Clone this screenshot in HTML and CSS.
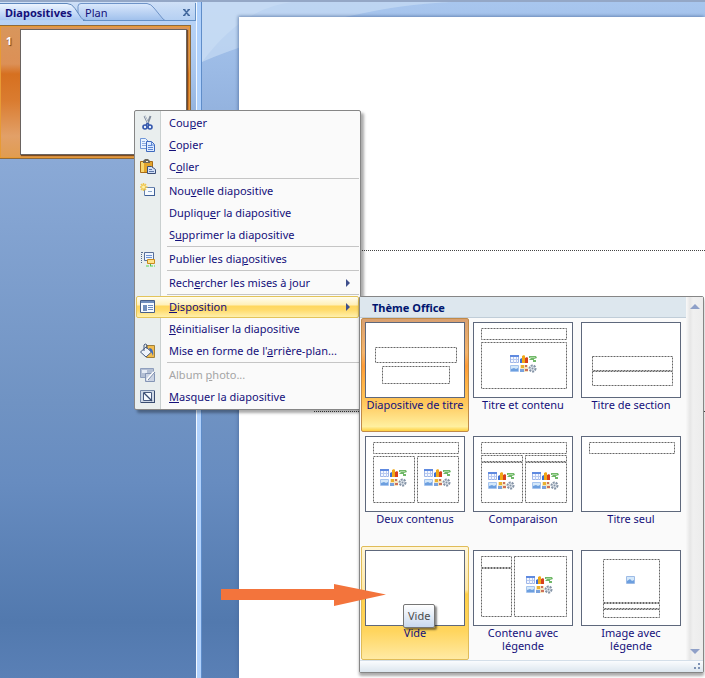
FILE: index.html
```html
<!DOCTYPE html>
<html lang="fr">
<head>
<meta charset="utf-8">
<title>Présentation</title>
<link rel="stylesheet" href="styles.css">
</head>
<body>
<svg class="defs" aria-hidden="true">
  <defs>
    <linearGradient id="sky" x1="0" y1="0" x2="0" y2="1"><stop offset="0" stop-color="#eef5ff"/><stop offset="1" stop-color="#a9c8f2"/></linearGradient>
    <linearGradient id="tab" x1="0" y1="0" x2="0" y2="1"><stop offset="0" stop-color="#dbe9fc"/><stop offset=".5" stop-color="#bdd4f4"/><stop offset="1" stop-color="#9fc0ec"/></linearGradient>
  </defs>
  <symbol id="content" viewBox="0 0 27 18">
    <path fill="#f4f8ff" stroke="#9fb6e8" d="M.5.5h8v7h-8z"/><path fill="#5f8ae0" d="M0 0h9v2H0z"/><path stroke="#b9caf0" d="M1 4.500h7M3.500 2v6M6.500 2v6"/>
    <path fill="#3f6fd0" d="M10 4l2-1v5h-2z"/><path fill="#f0a818" d="M12 1l2-1 1 1v7h-3z"/><path fill="#d8401c" d="M15 3l2-1 1 1v5h-3z"/>
    <path fill="#70b868" d="M19 1h7l1 2-3 1v1h2v2h-3V5h-4l2-2h-2z"/><path stroke="#a8d8a0" d="M20 2.500h5"/>
    <path fill="#d4e8fa" stroke="#a6c4ee" d="M.5 10.500h8v6h-8z"/><path fill="#6c9fdf" d="M1 14l3-1 2 1 2-1v3H1z"/>
    <path fill="#f6e6c0" d="M10 10h8v7h-8z"/><path fill="#e8b030" d="M11 10h3v3h-3z"/><path fill="#7aa2dc" d="M10 14h4v3h-4z"/><path fill="#cc705a" d="M15 10h2v2h-2zM15 14h3v2h-3z"/>
    <circle cx="22.500" cy="13.500" r="3" fill="#e4e9ef" stroke="#8493a6" stroke-width="2" stroke-dasharray="2 1"/><circle cx="22.500" cy="13.500" r="1" fill="#8493a6"/>
  </symbol>
  <symbol id="picture" viewBox="0 0 9 8">
    <path fill="#d4e8fa" stroke="#9dbbe6" d="M.5.5h8v7h-8z"/><path fill="#6c9fdf" d="M1 5l3-2 2 2 2-1v3H1z"/>
  </symbol>
</svg>

<div class="app">
  <aside class="pane">
    <div class="tabs">
      <svg class="tab-shape" viewBox="0 0 196 18" width="196" height="18" aria-hidden="true">
        <path fill="url(#tab)" stroke="#6f94c8" d="M78 17.500V3.500Q78 .5 81 .5H147Q151 1 154 5L163 16l2 1.500"/>
        <path fill="url(#sky)" stroke="#5f88bd" d="M-1 .5H67q5 0 8 5l6 9q2 3 5 3H-1z"/>
        <path stroke="#6591c6" d="M84 17.500h112M195.500 0v18"/>
        <path stroke="#b4d2f8" d="M0 17.500h83"/>
      </svg>
      <button class="tab tab-active" type="button">Diapositives</button>
      <button class="tab" type="button">Plan</button>
      <button class="close" type="button" aria-label="Fermer"><svg width="7" height="7" viewBox="0 0 7 7" aria-hidden="true"><path d="M0 .5h2.500M4.500.5H7M0 6.500h2.500M4.500 6.500H7M1.500 1l4 5M5.500 1l-4 5" stroke="#44699e" stroke-width="1.600"/></svg></button>
    </div>
    <button class="slide-item" type="button"><span class="slide-number">1</span><span class="slide-mini"></span></button>
  </aside>
  <div class="splitter"></div>
  <main class="workspace">
    <svg class="glow" width="100%" height="70" aria-hidden="true"><path fill="#c9ddf5" fill-opacity=".65" d="M0 0H90Q40 6 0 60z"/><path fill="#c9ddf5" fill-opacity=".65" d="M0 0H90Q40 6 0 60zM0 0H250C180 3 120 20 80 32Q30 47 0 60z"/></svg>
    <div class="slide">
      <div class="slide-content">
        <div class="placeholder title-box"></div>
        <div class="placeholder subtitle-box"></div>
      </div>
    </div>
  </main>
</div>

<ul class="menu">
  <li><button type="button"><svg class="icon" viewBox="0 0 16 16" aria-hidden="true"><path stroke="#7f8b9d" stroke-width="2" d="M4.500 1l4 8M10.500 1l-3 8"/><path stroke="#dbe2ea" d="M5 1l3 7"/><circle cx="5" cy="12" r="2" fill="#eaf1ff" stroke="#3457ac" stroke-width="1.600"/><circle cx="10" cy="12" r="2" fill="#eaf1ff" stroke="#3457ac" stroke-width="1.600"/><path stroke="#3457ac" stroke-width="1.500" d="M7.500 8L6 10M7.500 8L9 10"/></svg><span>Cou<u>p</u>er</span></button></li>
  <li><button type="button"><svg class="icon" viewBox="0 0 16 16" aria-hidden="true"><path fill="#e8f2ff" stroke="#7097d8" d="M.5 1.500h5l3 3v7h-8z"/><path stroke="#8eace0" d="M2 4.500h3M2 6.500h4M2 8.500h4"/><path fill="#deebff" stroke="#3e69bd" d="M6.500 4.500h5l3 3v7h-8z"/><path stroke="#5d87d2" d="M8 8.500h4M8 10.500h5M8 12.500h5M11.500 5v3h3"/></svg><span><u>C</u>opier</span></button></li>
  <li><button type="button"><svg class="icon" viewBox="0 0 16 16" aria-hidden="true"><path fill="#e3a52c" stroke="#a96c16" d="M.5 2.500h12v11H.5z"/><path fill="#f9d870" d="M1 3h3v10H1z"/><path fill="#6c6659" d="M3 4h7V2L8 0H5L3 2z"/><path fill="#f0ebdf" d="M6 2h2v1H6z"/><path fill="#d3e0f6" stroke="#3c4f78" d="M7.500 7.500h4l4 3v4h-8z"/><path stroke="#5d77a8" d="M9 10.500h3M9 12.500h5"/></svg><span>C<u>o</u>ller</span></button></li>
  <li class="separated"><button type="button"><svg class="icon" viewBox="0 0 16 16" aria-hidden="true"><path fill="#f6faff" stroke="#6681ad" d="M4.500 4.500h10v8h-10z"/><path fill="#3f5f96" d="M5 12h10v1H5zM14 5h1v8h-1z"/><path stroke="#89a6cd" d="M8 8.500h4"/><path stroke="#f0c850" stroke-width="1.500" d="M3.500 0v8M0 4h7.500M1 1l5 6M6 1L1 7"/><circle cx="3.500" cy="4" r="1.500" fill="#fff2a8"/></svg><span>Nou<u>v</u>elle diapositive</span></button></li>
  <li><button type="button"><span class="icon"></span><span>Dupliqu<u>e</u>r la diapositive</span></button></li>
  <li><button type="button"><span class="icon"></span><span>S<u>u</u>pprimer la diapositive</span></button></li>
  <li class="separated"><button type="button"><svg class="icon" viewBox="0 0 16 16" aria-hidden="true"><path stroke="#56698c" stroke-dasharray="1 1" d="M1.500 1v11M2 1.500h2"/><path fill="#edf4ff" stroke="#596f98" d="M4.500 1.500h9v8h-9z"/><path stroke="#6f94d3" d="M6 4.500h6M6 6.500h6"/><path fill="#ffe38a" stroke="#c98b1c" d="M7.500 8.500h7v4h-7z"/><path stroke="#54b350" d="M10.500 13v2"/><path stroke="#54d350" stroke-dasharray="3 1" d="M6 15h9"/></svg><span>Publier les dia<u>p</u>ositives</span></button></li>
  <li class="separated"><button type="button"><span class="icon"></span><span>Rech<u>e</u>rcher les mises à jour</span><svg class="more" width="4" height="8" viewBox="0 0 4 8" aria-hidden="true"><path d="M0 0l4 4-4 4z"/></svg></button></li>
  <li class="separated"><button type="button" class="highlight" aria-expanded="true"><svg class="icon" viewBox="0 0 16 16" aria-hidden="true"><path fill="#f7fbff" stroke="#475f89" d="M.5 1.500h14v12H.5z"/><path fill="#6f8ebd" d="M1 2h13v2H1zM3 6h4v6H3z"/><path stroke="#6c8cbd" d="M8 6.500h5M8 8.500h5M8 10.500h5"/></svg><span><u>D</u>isposition</span><svg class="more" width="4" height="8" viewBox="0 0 4 8" aria-hidden="true"><path d="M0 0l4 4-4 4z"/></svg></button></li>
  <li><button type="button"><span class="icon"></span><span><u>R</u>éinitialiser la diapositive</span></button></li>
  <li><button type="button"><svg class="icon" viewBox="0 0 16 16" aria-hidden="true"><path fill="#f3bd4d" stroke="#a0803c" d="M6.500 2.500h8v12h-8z"/><path fill="#eef3fa" stroke="#465a7e" d="M6 4l5.500 5L6 14 .5 9z"/><path stroke="#465a7e" d="M4 8V2q1-2 3 0v4"/><path fill="#3d69bd" d="M9 5q5 0 4 8-1-4-3-5z"/></svg><span>Mise en forme de l'<u>a</u>rrière-plan...</span></button></li>
  <li class="separated"><button type="button" disabled><svg class="icon" viewBox="0 0 16 16" aria-hidden="true"><path fill="#b3bfd4" stroke="#8e9fbd" d="M.5 1.500h13v9H.5z"/><path fill="#e5ebf5" d="M2 3h5v3H2z"/><path fill="#cbd4e4" stroke="#8495b5" d="M5.500 6.500h9v8h-9z"/><path stroke="#fff" stroke-width="2" d="M7 13l7-8"/><path stroke="#7386a9" d="M8 13l7-8"/></svg><span>Album <u>p</u>hoto...</span></button></li>
  <li><button type="button"><svg class="icon" viewBox="0 0 16 16" aria-hidden="true"><path fill="#cfd9e6" stroke="#7286a8" d="M.5 1.500h14v12H.5z"/><path fill="#f5f9ff" stroke="#465a80" d="M3.500 3.500h8v8h-8z"/><path stroke="#384b70" stroke-width="1.300" d="M4 4l8 8"/><path stroke="#384b70" d="M1 13.500h14M14.500 2v12"/></svg><span><u>M</u>asquer la diapositive</span></button></li>
</ul>

<section class="gallery" aria-label="Disposition">
  <div class="gallery-body">
    <div class="gallery-main">
      <h2>Thème Office</h2>
      <div class="layouts">
        <button type="button" class="layout selected"><svg class="thumb" viewBox="0 0 100 76" aria-hidden="true"><path d="M10.500 25.500h81v15h-81zM17.500 44.500h67v17h-67z"/></svg><span>Diapositive de titre</span></button>
        <button type="button" class="layout"><svg class="thumb" viewBox="0 0 100 76" aria-hidden="true"><path d="M8.500 6.500h85v11h-85zM8.500 20.500h85v46h-85z"/><use href="#content" x="37" y="33" width="27" height="18"/></svg><span>Titre et contenu</span></button>
        <button type="button" class="layout"><svg class="thumb" viewBox="0 0 100 76" aria-hidden="true"><path d="M11.500 34.500h80v14h-80zM11.500 49.500h80v14h-80z"/></svg><span>Titre de section</span></button>
        <button type="button" class="layout"><svg class="thumb" viewBox="0 0 100 76" aria-hidden="true"><path d="M8.500 6.500h85v11h-85zM8.500 20.500h41v46h-41zM52.500 20.500h41v46h-41z"/><use href="#content" x="15" y="33" width="27" height="18"/><use href="#content" x="59" y="33" width="27" height="18"/></svg><span>Deux contenus</span></button>
        <button type="button" class="layout"><svg class="thumb" viewBox="0 0 100 76" aria-hidden="true"><path d="M8.500 6.500h85v11h-85zM8.500 19.500h41v6h-41zM8.500 26.500h41v40h-41zM52.500 19.500h41v6h-41zM52.500 26.500h41v40h-41z"/><use href="#content" x="15" y="36" width="27" height="18"/><use href="#content" x="59" y="36" width="27" height="18"/></svg><span>Comparaison</span></button>
        <button type="button" class="layout"><svg class="thumb" viewBox="0 0 100 76" aria-hidden="true"><path d="M8.500 6.500h85v11h-85z"/></svg><span>Titre seul</span></button>
        <button type="button" class="layout hovered"><svg class="thumb" viewBox="0 0 100 76" aria-hidden="true"></svg><span>Vide</span><span class="tooltip" role="tooltip">Vide</span></button>
        <button type="button" class="layout"><svg class="thumb" viewBox="0 0 100 76" aria-hidden="true"><path d="M8.500 6.500h30v11h-30zM8.500 18.500h30v48h-30zM41.500 6.500h52v60h-52z"/><use href="#content" x="53" y="26" width="27" height="18"/></svg><span>Contenu avec légende</span></button>
        <button type="button" class="layout"><svg class="thumb" viewBox="0 0 100 76" aria-hidden="true"><path d="M22.500 9.500h56v43h-56zM22.500 53.500h56v5h-56zM22.500 59.500h56v8h-56z"/><use href="#picture" x="45" y="26" width="9" height="8"/></svg><span>Image avec légende</span></button>
      </div>
    </div>
    <div class="scrollbar">
      <button type="button" aria-label="Défiler vers le haut"><svg width="10" height="5" viewBox="0 0 10 5" aria-hidden="true"><path d="M5 0l5 5H0z"/></svg></button>
      <button type="button" aria-label="Défiler vers le bas"><svg width="10" height="5" viewBox="0 0 10 5" aria-hidden="true"><path d="M0 0h10L5 5z"/></svg></button>
    </div>
  </div>
  <div class="gallery-foot"><svg width="7" height="7" viewBox="0 0 7 7" aria-hidden="true"><path d="M4 0h2v2H4zM0 4h2v2H0zM4 4h2v2H4z"/></svg></div>
</section>

<svg class="pointer" width="166" height="22" viewBox="0 0 166 22" aria-hidden="true"><path fill="#f3743c" d="M0 5h113V0l52 10.500L113 22v-6H0z"/></svg>
</body>
</html>
```
FILE: styles.css
```css
* { box-sizing: border-box; }

body {
  margin: 0;
  position: relative;
  min-height: 100vh;
  font: 11px/14px "Noto Sans", "Open Sans", sans-serif;
  color: #14107a;
}

button {
  margin: 0;
  padding: 0;
  border: 0;
  background: none;
  font: inherit;
  color: inherit;
}

ul { list-style: none; margin: 0; padding: 0; }
svg { display: block; fill: none; }
.defs { position: absolute; width: 0; height: 0; }

.app {
  display: flex;
  min-height: 100vh;
  border-top: 2px solid #94a7c6;
  background: linear-gradient(#a8c6ee 0, #9bbae5 70px, #8aa9d6 160px, #7093c3 400px, #678cc0 480px, #5279ae 620px, #5a80b6 678px);
}

/* Slide list */
.pane { width: 196px; flex: none; background: linear-gradient(#bcd6f8, #bcd6f800 110px); }

.tabs {
  position: relative;
  display: flex;
  align-items: center;
  height: 19px;
  padding: 2px 5px 0;
  background: linear-gradient(#cfe0f7, #b4cff2);
}
.tab-shape { position: absolute; left: 0; top: 1px; }
.tab { position: relative; line-height: 16px; margin-right: 13px; }
.tab-active { font-weight: bold; }
.close { position: relative; margin-left: auto; padding: 5px 1px; }

.slide-item {
  display: flex;
  width: 191px;
  height: 134px;
  margin-top: 4px;
  padding: 3px 3px 3px 0;
  border: 1px solid #8f6a3c;
  border-left: 0;
  background: linear-gradient(#d8965c 0, #dc9056 38px, #d67020 48px, #da7c30 75px, #e2a068 110px, #e09c50);
  box-shadow: inset 0 0 0 1px #e89a34;
}
.slide-number {
  width: 20px;
  padding: 5px 6px 0 4px;
  font-weight: bold;
  color: #fff;
  text-shadow: 1px 1px 1px #6b3b12;
}
.slide-mini { flex: 1; border: 1px solid #6a6360; background: #fff; box-shadow: 1px 1px 1px #7d4b1c; }

.splitter { width: 6px; flex: none; border-left: 1px solid #f2f8ff; border-right: 1px solid #5f8dc9; background: #b0d1fc; }

/* Editing area */
.workspace { position: relative; display: flex; flex: 1; padding: 15px 0 0 37px; }
.glow { position: absolute; left: 0; top: 0; }
.slide { position: relative; display: flex; flex: 1; background: #fff; box-shadow: -1px -1px 3px #48699aaa; }
.slide-content { position: relative; flex: 1; overflow: hidden; }
.placeholder { position: absolute; right: 0; border: 1px dotted #444; border-right: 0; }
.title-box { left: 75px; top: 233px; height: 162px; }
.subtitle-box { left: 135px; top: 425px; height: 180px; right: 10px; }

/* Context menu */
.menu {
  position: absolute;
  left: 134px;
  top: 110px;
  width: 227px;
  padding: 1px 0;
  border: 1px solid #868686;
  border-radius: 2px;
  background: linear-gradient(90deg, #e9eeee 25px, #c9cfcf 25px, #c9cfcf 26px, #fafafa 26px);
  box-shadow: 3px 3px 3px #00000055;
}
.menu button {
  display: flex;
  align-items: center;
  width: 100%;
  height: 22px;
  padding: 0 10px 0 5px;
  text-align: left;
}
.menu .icon { width: 16px; height: 16px; margin-right: 13px; flex: none; }
.menu u { text-underline-offset: 1px; }
.menu .more { margin-left: auto; fill: #3f4f8c; }
.menu button:disabled { color: #a5a5a5; }
.separated::before { content: ""; display: block; height: 1px; margin: 0 1px 1px 32px; background: #c5c5c5; }
.menu .highlight {
  width: auto;
  margin: 0 1px;
  min-width: calc(100% - 2px);
  padding: 0 8px 0 3px;
  border: 1px solid #e3c45a;
  border-radius: 2px;
  background: linear-gradient(#fffdf0, #fff0b8 40%, #ffd75e 45%, #ffdb6c 65%, #fff0ac);
}

/* Layout gallery */
.gallery {
  position: absolute;
  left: 359px;
  top: 296px;
  width: 345px;
  border: 1px solid #868686;
  border-radius: 2px;
  background: #fafafa;
  box-shadow: 0 3px 3px #00000055;
}
.gallery-body { display: flex; }
.gallery-main { flex: 1; }
.gallery h2 {
  margin: 0;
  height: 21px;
  padding: 0 12px;
  border-bottom: 1px solid #c0cdd8;
  background: #dde7ee;
  font-size: 11px;
  line-height: 21px;
  color: #00156e;
}
.layouts { display: grid; grid-template-columns: repeat(3, 108px); grid-auto-rows: 114px; padding: 0 1px; }
.layout {
  position: relative;
  display: flex;
  flex-direction: column;
  align-items: center;
  padding: 3px;
  border: 1px solid transparent;
  border-radius: 2px;
  line-height: 13px;
}
.layout > span { max-width: 90px; }
.thumb { width: 100px; height: 76px; outline: 1px solid #5e687c; outline-offset: -1px; background: #fff; }
.thumb > path { stroke: #666; stroke-dasharray: 2 1; }
.selected { border-color: #c08a48; background: linear-gradient(#d9a070, #f5b56c 30%, #ff9d38 42%, #ffb044 55%, #ffc85c 75%, #fff0a0 96%, #ffd040); }
.hovered { border-color: #e0bc58; background: linear-gradient(#fff6d8, #ffe9a8 38%, #ffd048 42%, #ffd55e 75%, #ffeaa4); }
.layout.selected > span { max-width: none; }

.layout .tooltip {
  position: absolute;
  left: 41px;
  top: 57px;
  padding: 5px 4px;
  border: 1px solid #767676;
  border-radius: 2px;
  background: linear-gradient(#fff, #c9d9ef);
  box-shadow: 2px 2px 2px #00000077;
  line-height: 12px;
  color: #4c4c4c;
}

.scrollbar {
  display: flex;
  flex-direction: column;
  justify-content: space-between;
  align-items: center;
  width: 18px;
  padding: 7px 0 6px;
  border-left: 1px solid #f6f6f6;
  background: linear-gradient(90deg, #f4f4f4, #e6e6e6 3px, #f0f0f0 6px, #ececec);
}
.scrollbar path { fill: #8fa0c8; }
.gallery-foot {
  display: flex;
  justify-content: flex-end;
  align-items: flex-end;
  height: 12px;
  padding: 2px;
  border-top: 1px solid #d4dfe9;
  background: linear-gradient(#fafcfe, #dce6ee);
}
.gallery-foot path { fill: #7d93b5; }

.pointer { position: absolute; left: 221px; top: 584px; }
```
